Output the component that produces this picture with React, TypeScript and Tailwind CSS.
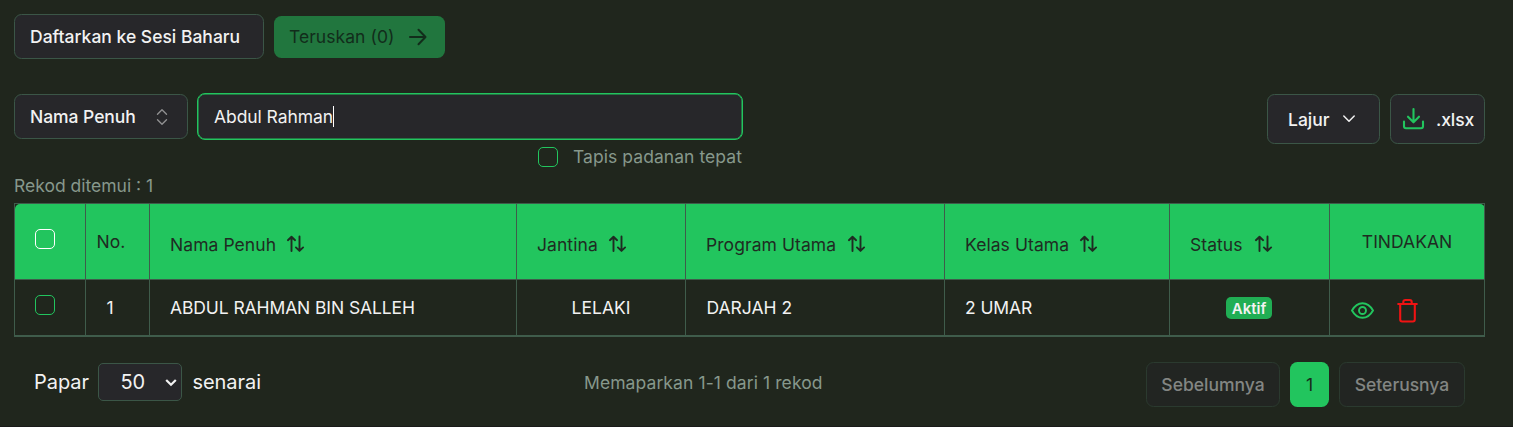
import React from "react";

const SortIcon = () => (
  <svg width="20" height="20" viewBox="0 0 20 20" fill="none" stroke="currentColor" strokeWidth="1.9" strokeLinecap="round" strokeLinejoin="round">
    <path d="M6.500 17V2.800M2.900 6.200l3.600-3.500 3.600 3.500M14.500 2.500v14M10.900 13.400l3.600 3.500 3.600-3.500" />
  </svg>
);

const Box = ({ white = false }: { white?: boolean }) => (
  <span className={`block size-5 shrink-0 rounded-[5px] border ${white ? "border-white" : "border-[#22c55e]"}`} />
);

const columns = [
  { label: "Nama Penuh", width: "w-[367px]", text: "w-[105px]" },
  { label: "Jantina", width: "w-[169px]", text: "w-[60px]" },
  { label: "Program Utama", width: "w-[259px]", text: "w-[130px]" },
  { label: "Kelas Utama", width: "w-[225px]", text: "w-[103px]" },
  { label: "Status", width: "w-[160px]", text: "w-[53px]" },
];

const cell = "shrink-0 border-r border-[#3f5c4b]";

export default function App() {
  return (
    <div className="flex h-[427px] w-[1513px] flex-col overflow-hidden border-b border-[#191a19] bg-[#20261d] pl-[14px] pr-7 pt-[14px] font-['Inter',sans-serif] text-[17.5px] leading-[25px] text-[#f2f2f2]">
      <div className="flex h-[45px] shrink-0 items-center gap-[10px]">
        <button className="h-[45px] w-[250px] rounded-[7.5px] border border-[#3b5647] bg-[#27272a] pl-[15px] text-left font-medium">
          Daftarkan ke Sesi Baharu
        </button>
        <button className="flex h-[42px] w-[171px] items-center rounded-[7.5px] bg-[#21763e] pl-[15px] text-[#122d1b]">
          <span className="w-[119px] text-left tracking-[0.05px]">Teruskan (0)</span>
          <svg width="20" height="20" viewBox="0 0 20 20" fill="none" stroke="currentColor" strokeWidth="2" strokeLinecap="round" strokeLinejoin="round">
            <path d="M2 10h15.500M10.500 2.800l7 7.200-7 7.200" />
          </svg>
        </button>
      </div>

      <div className="mt-[34px] flex h-[76px] shrink-0">
        <button className="mt-px flex h-[45px] w-[174px] shrink-0 items-center justify-between rounded-[7.5px] border border-[#3b5647] bg-[#27272a] pl-[15px] pr-[15px] font-medium tracking-[-0.05px]">
          Nama Penuh
          <svg width="20" height="20" viewBox="0 0 20 20" fill="none" stroke="#909091" strokeWidth="1.400" strokeLinecap="round" strokeLinejoin="round">
            <path d="m5.500 7.300 4.500-4.500 4.500 4.500M5.500 12.700l4.500 4.500 4.500-4.500" />
          </svg>
        </button>
        <div className="ml-[9px] flex w-[546px] flex-col">
          <div className="flex h-[47px] shrink-0 items-center rounded-[8px] border border-[#22c55e] bg-[#27272a] pl-4 tracking-[-0.07px] shadow-[inset_0_0_0_0.5px_#22c55e]">
            Abdul Rahman
            <span className="h-[21px] w-px bg-white" />
          </div>
          <div className="mt-[7px] flex h-5 items-center justify-end gap-[15px] pr-px text-[#87988c]">
            <Box />
            <span className="-mt-0.5 tracking-[0.06px]">Tapis padanan tepat</span>
          </div>
        </div>
        <div className="ml-auto mt-px flex h-[50px] gap-[10px] font-medium">
          <button className="flex w-[113px] items-center rounded-[7.5px] border border-[#3b5647] bg-[#27272a] pl-5">
            <span className="w-[51px] text-left">Lajur</span>
            <svg width="20" height="20" viewBox="0 0 20 20" fill="none" stroke="currentColor" strokeWidth="1.5" strokeLinecap="round" strokeLinejoin="round">
              <path d="m4.800 7 5.200 5.200L15.200 7" />
            </svg>
          </button>
          <button className="flex w-[95px] items-center rounded-[7.5px] border border-[#3b5647] bg-[#27272a] pl-[11px]">
            <svg width="24" height="24" viewBox="0 0 24 24" fill="none" stroke="#22c55e" strokeWidth="2.1" strokeLinecap="round" strokeLinejoin="round">
              <path d="M11.500 2v13M6 9.700l5.500 5.600L17 9.700M2 14.500v4.700a2 2 0 0 0 2 2h15a2 2 0 0 0 2-2v-4.700" />
            </svg>
            <span className="ml-[10px] tracking-[-0.1px]">.xlsx</span>
          </button>
        </div>
      </div>

      <div className="mt-[4px] h-[30px] shrink-0 text-[#87988c]">Rekod ditemui : 1</div>

      <div className="h-[134px] w-[1471px] shrink-0 border-b-2 border-l border-t border-[#3f5c4b]">
        <div className="flex h-[76px] rounded-t-[5px] border-b border-[#3f5c4b] bg-[#22c55e] text-[#1f2b22]">
          <div className={`${cell} w-[71px] pl-5 pt-[25px]`}><Box white /></div>
          <div className={`${cell} w-[64px] pl-[10.500px] pt-[25px]`}>No.</div>
          {columns.map((c) => (
            <div key={c.label} className={`${cell} ${c.width} flex items-center gap-[10px] pl-5 pt-[5px] tracking-[0.07px]`}>
              <span className={`${c.text} shrink-0 whitespace-nowrap`}>{c.label}</span>
              <SortIcon />
            </div>
          ))}
          <div className={`${cell} w-[155px] pt-[25px] text-center`}>TINDAKAN</div>
        </div>
        <div className="flex h-[55px]">
          <div className={`${cell} w-[71px] pl-5 pt-[15px]`}><Box /></div>
          <div className={`${cell} w-[64px] pl-[20.500px] pt-[15px]`}>1</div>
          <div className={`${cell} w-[367px] pl-5 pt-[15px] tracking-[-0.1px]`}>ABDUL RAHMAN BIN SALLEH</div>
          <div className={`${cell} w-[169px] pt-[15px] text-center`}>LELAKI</div>
          <div className={`${cell} w-[259px] pl-[20.500px] pt-[15px]`}>DARJAH 2</div>
          <div className={`${cell} w-[225px] pl-5 pt-[15px] tracking-[-0.1px]`}>2 UMAR</div>
          <div className={`${cell} flex w-[160px] justify-center pr-px pt-[17px]`}>
            <span className="flex h-[22px] w-[46px] items-center justify-center rounded-[5px] bg-[#20ae54] text-[15px] font-semibold leading-none">Aktif</span>
          </div>
          <div className={`${cell} flex w-[155px] pl-5 pt-[18px]`}>
            <svg width="25" height="25" viewBox="0 0 25 25" fill="none" stroke="#22c55e" strokeWidth="1.9">
              <path d="M2 12.500C4.500 8 8.200 5.200 12.500 5.200S20.500 8 23 12.500C20.500 17 16.800 19.800 12.500 19.800S4.500 17 2 12.500Z" />
              <circle cx="12.500" cy="12.500" r="3.500" />
            </svg>
            <svg className="ml-5" width="25" height="25" viewBox="0 0 25 25" fill="none" stroke="#f01313" strokeWidth="2.100" strokeLinecap="round" strokeLinejoin="round">
              <path d="M3.200 6h18.600M5.200 6v15.500a2 2 0 0 0 2 2h10.600a2 2 0 0 0 2-2V6M8.300 5.500V4a2 2 0 0 1 2-2h4.400a2 2 0 0 1 2 2v1.500" />
            </svg>
          </div>
        </div>
      </div>

      <div className="mt-[25px] flex h-[45px] shrink-0 pl-5 pr-5">
        <div className="flex h-[40px] w-[550px] items-center text-[20px] tracking-[-0.06px]">
          <span className="w-[64px]">Papar</span>
          <div className="flex h-[38px] w-[84px] items-center rounded-[5px] border border-[#3b5647] bg-[#27272a] pl-[21.500px]">
            <span className="w-[43px]">50</span>
            <svg width="14" height="14" viewBox="0 0 14 14" fill="none" stroke="currentColor" strokeWidth="2.200">
              <path d="m2.200 5 4.800 4.800L11.800 5" />
            </svg>
          </div>
          <span className="ml-[10.500px]">senarai</span>
        </div>
        <div className="pt-[8px] tracking-[0.09px] text-[#87988c]">Memaparkan 1-1 dari 1 rekod</div>
        <div className="ml-auto flex gap-[10px] font-medium">
          <button className="w-[134px] rounded-[7.5px] border border-[#2b3a2f] bg-[#222522] text-[#838683]">Sebelumnya</button>
          <button className="w-[39px] rounded-[7.5px] bg-[#22c55e] font-normal text-[#172d1c]">1</button>
          <button className="w-[126px] rounded-[7.5px] border border-[#2b3a2f] bg-[#222522] text-[#838683]">Seterusnya</button>
        </div>
      </div>
    </div>
  );
}
